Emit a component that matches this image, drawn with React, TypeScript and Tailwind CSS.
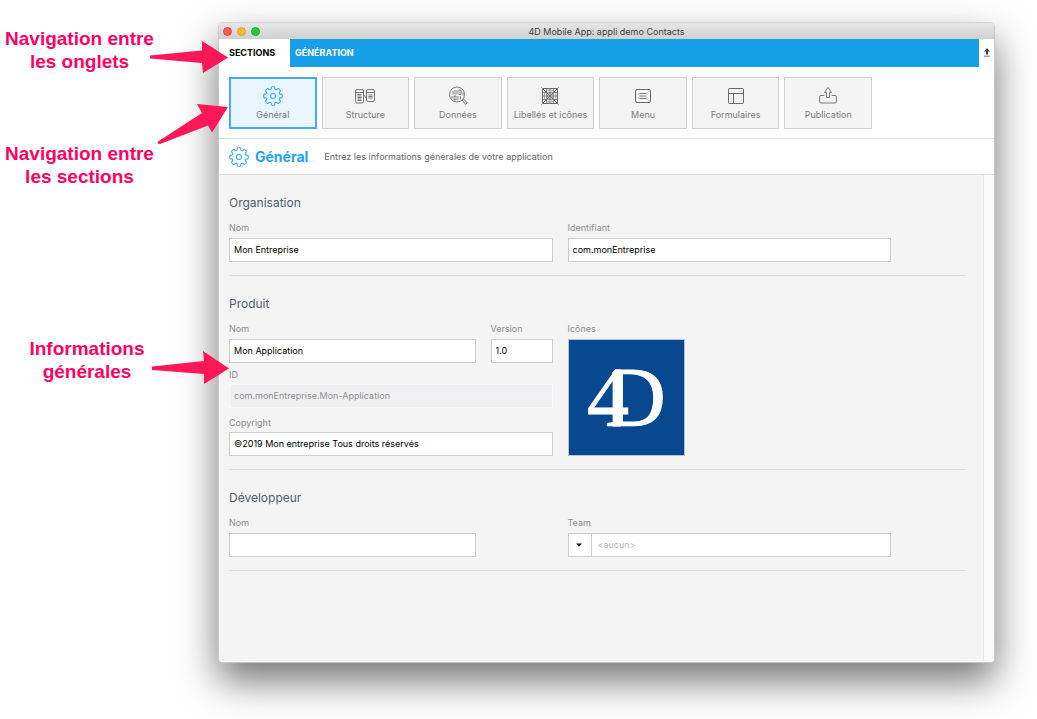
import { useState } from 'react';
import type { ReactNode } from 'react';

const GEAR_PATH = buildGear(8, 7.4, 9.3);

function buildGear(teeth: number, inner: number, outer: number) {
  const point = (radius: number, degrees: number) => {
    const angle = ((degrees - 90) * Math.PI) / 180;
    return `${(radius * Math.cos(angle)).toFixed(2)} ${(radius * Math.sin(angle)).toFixed(2)}`;
  };
  const step = 360 / teeth;
  let path = `M${point(inner, -14)}`;
  for (let i = 0; i < teeth; i++) {
    const a = i * step;
    path += `Q${point(outer, a - 13)} ${point(outer, a - 7)}L${point(outer, a + 7)}`;
    path += `Q${point(outer, a + 13)} ${point(inner, a + 14)}`;
    path += `Q${point(inner - 1, a + step / 2)} ${point(inner, a + step - 14)}`;
  }
  return path + 'Z';
}

function Icon({ children }: { children: ReactNode }) {
  return (
    <svg
      className="w-5 h-5 shrink-0"
      viewBox="-10 -10 20 20"
      fill="none"
      stroke="currentColor"
      strokeLinejoin="round"
      aria-hidden="true"
    >
      {children}
    </svg>
  );
}

function GearIcon() {
  return (
    <Icon>
      <path d={GEAR_PATH} strokeWidth="1.1" />
      <circle r="2.5" strokeWidth="1.1" />
    </Icon>
  );
}

function StructureIcon() {
  return (
    <Icon>
      <g strokeWidth="0.9">
        <rect x="-9.5" y="-6.5" width="8" height="13.5" rx="1.5" />
        <path d="M-9.5-3.5h8" />
        <rect x="1.5" y="-6.5" width="8" height="12" rx="1.5" />
        <path d="M1.5-3.5h8M-1.5-1C1-1-1 2 1.500 2" />
      </g>
      <path d="M-7.500-1.500h4M-7.500 0h4M-7.500 1.500h4M-7.500 3h4M-7.500 4.500h4M3.500-1h4M3.500 .5h4M3.500 2h4" strokeWidth="0.9" />
    </Icon>
  );
}

function DataIcon() {
  return (
    <Icon>
      <circle cx="-1" cy="-1.5" r="7.5" strokeWidth="0.9" />
      <path d="M4.2 4.2L5.7 3l3.500 3.800L7.500 8.300Z" strokeWidth="0.9" />
      <path d="M-5-5v3.500M-3-6v4.500M-1-6v4.500M1-6h2v4.500h-2zM-6 0v3M-4 0h2v4h-2zM0 0v4.500M2.500 0v3.500M5-3.500v3" strokeWidth="0.8" />
    </Icon>
  );
}

function LabelsIcon() {
  return (
    <Icon>
      <g strokeWidth="0.7">
        <rect x="-7.5" y="-7.5" width="15" height="15" strokeWidth="1" />
        <path d="M-8.500-8.500l17 17M8.500-8.500l-17 17" strokeWidth="1" />
        <path d="M0-7.500v15M-7.500 0h15M-3.500-7.500v15M3.500-7.500v15M-7.500-3.500h15M-7.500 3.500h15" />
        <circle r="6" />
        <circle r="2.5" />
      </g>
    </Icon>
  );
}

function MenuIcon() {
  return (
    <Icon>
      <rect x="-7.5" y="-6.5" width="15" height="13" rx="1.5" />
      <path d="M-3.500-2.500h7M-3.500 0h7M-3.500 2.500h7" strokeWidth="0.9" />
    </Icon>
  );
}

function FormsIcon() {
  return (
    <Icon>
      <rect x="-7.5" y="-7.5" width="15" height="15" rx="0.8" />
      <path d="M-7.500-2.500h15M-2.500-2.500v10" />
    </Icon>
  );
}

function PublishIcon() {
  return (
    <Icon>
      <g strokeWidth="0.9">
        <path d="M-3.500-.5H-7Q-8.500-.5-8.500 1V5.500Q-8.500 7-7 7H7Q8.500 7 8.500 5.500V1Q8.500-.5 7-.5H3.500" />
        <path d="M0-8.500l3.500 5H1.500V1.500h-3v-5h-2z" />
      </g>
    </Icon>
  );
}

const sections = [
  { id: 'general', label: 'Général', icon: GearIcon },
  { id: 'structure', label: 'Structure', icon: StructureIcon },
  { id: 'data', label: 'Données', icon: DataIcon },
  { id: 'labels', label: 'Libellés et icônes', icon: LabelsIcon },
  { id: 'menu', label: 'Menu', icon: MenuIcon },
  { id: 'forms', label: 'Formulaires', icon: FormsIcon },
  { id: 'publish', label: 'Publication', icon: PublishIcon },
];

function Field({ id, label, value = '', disabled = false, tight = false, className = '' }: {
  id: string;
  label: string;
  value?: string;
  disabled?: boolean;
  tight?: boolean;
  className?: string;
}) {
  return (
    <div className={`flex flex-col ${tight ? 'gap-[2px]' : 'gap-[3px]'} ${className}`}>
      <label htmlFor={id} className="text-[9px] leading-[14px] text-[#8c8c8c]">{label}</label>
      <input
        id={id}
        type="text"
        defaultValue={value}
        disabled={disabled}
        className={`h-6 w-full min-w-0 border px-1 pb-px text-[9px] outline-none
          ${disabled ? 'bg-[#f0f0f2] border-[#f9f9f9] text-[#8f8f8f]' : 'bg-white border-[#cdcdcd] text-black'}`}
      />
    </div>
  );
}

function Group({ title, children }: { title: string; children: ReactNode }) {
  return (
    <section className="pt-5 pb-[13px] border-b border-[#dfdfdf]">
      <h2 className="text-xs leading-4 text-[#4c6070]">{title}</h2>
      <div className="mt-[10px] pr-[74px] grid grid-cols-2 gap-x-[15px]">{children}</div>
    </section>
  );
}

function Annotations() {
  return (
    <aside className="relative w-[218px] shrink-0 pt-[5px] text-center text-[19px] leading-[23px] font-bold text-[#ff0066] font-['Liberation_Sans',Arial,sans-serif]">
      <p className="w-[159px]">Navigation entre<br />les onglets</p>
      <p className="w-[159px] mt-[69px]">Navigation entre<br />les sections</p>
      <p className="w-[174px] mt-[149px]">Informations<br />générales</p>
      <svg className="absolute left-0 top-0 z-10 w-60 h-96 pointer-events-none" viewBox="0 22 240 384" fill="#ff1758" aria-hidden="true">
        <path d="M150 55.500L202 50.500V41L228 57.500L203 73L202 63L150 58.500Z" />
        <path d="M158 141.500L202 113L197 104L228 107L212 132.500L208 125.500L160 144Q157 144 158 141.500Z" />
        <path d="M152 366.500L204 361L203 351L229 368.500L204 384V374L152 370Z" />
      </svg>
    </aside>
  );
}

export default function App() {
  const [active, setActive] = useState('general');

  return (
    <div className="flex min-h-screen bg-white pt-[22px] pb-14 pr-[42px] overflow-hidden font-[Inter,sans-serif]">
      <Annotations />

      <div className="flex-1 min-w-0 flex flex-col rounded-[5px] border-x border-b border-[#c9c9c9] bg-white overflow-hidden shadow-[0_18px_38px_rgba(0,0,0,0.55)]">
        {/* Title bar */}
        <header className="relative h-[17px] shrink-0 flex items-center justify-center bg-linear-to-b from-[#e6e6e6] to-[#d0d0d0] border-t border-[#d6d6d6]">
          <div className="absolute left-1 flex gap-[5px]">
            <span className="w-[9px] h-[9px] rounded-full bg-[#fc5b57] border border-[#df4744]" />
            <span className="w-[9px] h-[9px] rounded-full bg-[#fdbc2e] border border-[#dea034]" />
            <span className="w-[9px] h-[9px] rounded-full bg-[#28c840] border border-[#1fa833]" />
          </div>
          <h1 className="text-[9px] leading-none text-[#3c3c3c]">4D Mobile App: appli demo Contacts</h1>
        </header>

        {/* Tabs */}
        <nav className="h-7 shrink-0 flex text-[9px] font-bold">
          <button className="w-[71px] pl-[10px] bg-white text-black text-left">SECTIONS</button>
          <div className="flex-1 flex bg-[#179fe8]">
            <button className="px-[5px] text-white">GÉNÉRATION</button>
          </div>
          <button className="w-[15px] flex items-center justify-center" aria-label="Exporter">
            <svg className="w-2 h-[10px]" viewBox="0 0 8 10" aria-hidden="true">
              <path d="M4 0L7 3.500H5V6.500H3V3.500H1Z" fill="#444" />
              <path d="M1 7.500h6v1.500H1z" fill="#a5a5a5" />
            </svg>
          </button>
        </nav>

        {/* Section buttons */}
        <div className="shrink-0 px-[10px] pt-[10px] pb-[9px] border-b border-[#dedede]">
          <div className="grid grid-cols-7 gap-[5px] w-[643px] max-w-full">
            {sections.map((section) => {
              const SectionIcon = section.icon;
              const selected = active === section.id;
              return (
                <button
                  key={section.id}
                  onClick={() => setActive(section.id)}
                  className={`h-[52px] flex flex-col items-center gap-[2px]
                    ${selected
                      ? 'bg-[#e9f6ff] border-2 border-[#47a9ee] text-[#3fa9ee] pt-[7px]'
                      : 'bg-[#f4f4f4] border border-[#cfcfcf] text-[#6a6a6a] pt-2'
                    }`}
                >
                  <SectionIcon />
                  <span className="text-[9px] leading-[14px] whitespace-nowrap text-[#7b7b7b]">{section.label}</span>
                </button>
              );
            })}
          </div>
        </div>

        {/* Section heading */}
        <div className="h-9 shrink-0 flex items-center px-[10px] border-b border-[#dedede]">
          <span className="text-[#3fa9ee]"><GearIcon /></span>
          <h2 className="ml-[6px] text-sm font-bold text-[#1ea3f1]">Général</h2>
          <p className="ml-4 text-[9px] text-[#666666]">Entrez les informations générales de votre application</p>
        </div>

        {/* Form */}
        <div className="flex-1 flex bg-[#f4f4f4] border-b border-white">
          <form className="flex-1 pl-[10px] pr-[18px]">
            <Group title="Organisation">
              <Field id="org-name" label="Nom" value="Mon Entreprise" />
              <Field id="org-id" label="Identifiant" value="com.monEntreprise" />
            </Group>

            <Group title="Produit">
              <div>
                <div className="flex gap-[15px]">
                  <Field id="product-name" label="Nom" value="Mon Application" className="flex-1" />
                  <Field id="product-version" label="Version" value="1.0" className="w-[62px]" />
                </div>
                <Field id="product-id" label="ID" value="com.monEntreprise.Mon-Application" disabled tight className="mt-[5px]" />
                <Field id="product-copyright" label="Copyright" value="©2019 Mon entreprise Tous droits réservés" tight className="mt-2" />
              </div>
              <div className="flex flex-col gap-[3px]">
                <span className="text-[9px] leading-[14px] text-[#8c8c8c]">Icônes</span>
                <svg className="w-[117px] h-[117px] border border-[#b5c3d3] bg-[#084890]" viewBox="0 0 115 115" role="img" aria-label="4D">
                  <g className="font-['Liberation_Serif',serif]" fill="white" stroke="white" strokeWidth="1" fontSize="84">
                    <text x="36" y="86">D</text>
                    {/* hides the upper serif of the D behind the slope of the 4 */}
                    <path d="M34 27H48L34 44Z" fill="#084890" stroke="none" />
                    <text x="18" y="86">4</text>
                  </g>
                </svg>
              </div>
            </Group>

            <Group title="Développeur">
              <Field id="dev-name" label="Nom" className="pr-[77px]" />
              <div className="flex flex-col gap-[3px]">
                <label htmlFor="dev-team" className="text-[9px] leading-[14px] text-[#8c8c8c]">Team</label>
                <div className="relative h-6">
                  <select id="dev-team" className="block appearance-none w-full h-6 border border-[#cdcdcd] bg-white pl-[29px] text-[9px] text-[#b6b3c4] outline-none">
                    <option>&lt;aucun&gt;</option>
                  </select>
                  <span className="absolute left-0 top-0 w-6 h-6 flex items-center justify-center border-r border-[#cdcdcd] pointer-events-none">
                    <svg className="w-[6px] h-1" viewBox="0 0 6 4" aria-hidden="true">
                      <path d="M0 0.500h6L3 3.500Z" fill="#111" />
                    </svg>
                  </span>
                </div>
              </div>
            </Group>
          </form>
          <div className="w-[11px] shrink-0 bg-[#fafafa] border-l border-[#e6e6e6]" />
        </div>
      </div>
    </div>
  );
}
